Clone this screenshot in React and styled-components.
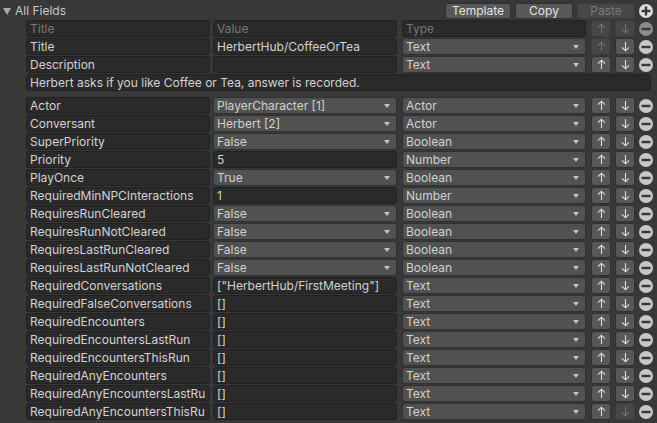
import React from "react";
import styled, { createGlobalStyle, css } from "styled-components";

const Global = createGlobalStyle`
  html, body { margin: 0; padding: 0; background: #383838; }
  body { font-family: Inter, "Noto Sans", "Liberation Sans", sans-serif; font-size: 12px; color: #d2d2d2; }
  * { box-sizing: border-box; }
`;

const Panel = styled.div`
  width: 657px;
  height: 423px;
  background: #383838;
  overflow: hidden;
  display: flex;
  flex-direction: column;
`;

const Header = styled.div`
  height: 20px;
  display: flex;
  align-items: center;
  padding: 1px 4px 0 3px;
`;

const Foldout = styled.span`
  width: 0;
  height: 0;
  border-left: 4px solid transparent;
  border-right: 4px solid transparent;
  border-top: 7px solid #a9a9a9;
  margin-right: 4px;
  margin-top: 1px;
`;

const HeaderTitle = styled.span`
  color: #c8c8c8;
  font-size: 12px;
  flex: 1;
`;

const HeaderButton = styled.div`
  height: 16px;
  width: ${(p) => p.$w}px;
  margin-right: 4px;
  border-radius: 3px;
  background: ${(p) => (p.$disabled ? "#474747" : "#585858")};
  border: 1px solid ${(p) => (p.$disabled ? "#3c3c3c" : "#303030")};
  color: ${(p) => (p.$disabled ? "#7c7c7c" : "#e4e4e4")};
  display: flex;
  align-items: center;
  justify-content: center;
  font-size: 12px;
`;

const Rows = styled.div`
  display: flex;
  flex-direction: column;
  padding-left: 26px;
`;

const Row = styled.div`
  display: flex;
  align-items: center;
  height: 17px;
  margin-bottom: ${(p) => (p.$mb ?? 1)}px;
`;

const fieldBase = css`
  height: 17px;
  width: 184px;
  border-radius: 3px;
  padding: 0 3px;
  display: flex;
  align-items: center;
  white-space: nowrap;
  overflow: hidden;
  font-size: 12px;
`;

const TextField = styled.div`
  ${fieldBase}
  width: ${(p) => p.$w ?? 184}px;
  margin-left: ${(p) => p.$ml ?? 0}px;
  background: #2a2a2a;
  border: 1px solid #212121;
  color: ${(p) => (p.$placeholder ? "#767676" : "#d2d2d2")};
`;

const Dropdown = styled.div`
  ${fieldBase}
  margin-left: ${(p) => p.$ml ?? 0}px;
  background: #515151;
  border: 1px solid #303030;
  color: #d2d2d2;
  justify-content: space-between;
  padding-right: 6px;
`;

const Caret = styled.span`
  width: 0;
  height: 0;
  border-left: 3.5px solid transparent;
  border-right: 3.5px solid transparent;
  border-top: 4px solid #c4c4c4;
  margin-top: 1px;
`;

const ArrowButton = styled.div`
  height: 17px;
  width: 20px;
  margin-left: ${(p) => p.$ml}px;
  border-radius: 3px;
  background: ${(p) => (p.$disabled ? "#464646" : "#585858")};
  border: 1px solid ${(p) => (p.$disabled ? "#3c3c3c" : "#303030")};
  color: ${(p) => (p.$disabled ? "#747474" : "#dedede")};
  display: flex;
  align-items: center;
  justify-content: center;
`;

const ArrowSvg = styled.svg`
  width: 9px;
  height: 11px;
  transform: ${(p) => (p.$down ? "rotate(180deg)" : "none")};
`;

const CircleBtn = styled.svg`
  width: 14px;
  height: 14px;
  margin-left: ${(p) => p.$ml ?? 4}px;
  flex: none;
`;

const Description = styled(TextField)`
  width: 625px;
`;

function Arrow({ down, disabled, ml }) {
  return (
    <ArrowButton $ml={ml} $disabled={disabled}>
      <ArrowSvg viewBox="0 0 9 11" $down={down}>
        <path d="M4.5 1.2 V10 M1 4.7 L4.5 1.2 L8 4.7" fill="none" stroke="currentColor" strokeWidth="1.1" />
      </ArrowSvg>
    </ArrowButton>
  );
}

function Minus({ disabled }) {
  const c = disabled ? "#8a8a8a" : "#c8c8c8";
  return (
    <CircleBtn viewBox="0 0 14 14">
      <circle cx="7" cy="7" r="7" fill={c} />
      <rect x="2.5" y="5.8" width="9" height="2.4" fill="#383838" />
    </CircleBtn>
  );
}

function Plus() {
  return (
    <CircleBtn viewBox="0 0 14 14" $ml={0}>
      <circle cx="7" cy="7" r="7" fill="#dcdcdc" />
      <rect x="2.5" y="5.8" width="9" height="2.4" fill="#383838" />
      <rect x="5.8" y="2.5" width="2.4" height="9" fill="#383838" />
    </CircleBtn>
  );
}

const fields = [
  ["Actor", "PlayerCharacter [1]", true, "Actor"],
  ["Conversant", "Herbert [2]", true, "Actor"],
  ["SuperPriority", "False", true, "Boolean"],
  ["Priority", "5", false, "Number"],
  ["PlayOnce", "True", true, "Boolean"],
  ["RequiredMinNPCInteractions", "1", false, "Number"],
  ["RequiresRunCleared", "False", true, "Boolean"],
  ["RequiresRunNotCleared", "False", true, "Boolean"],
  ["RequiresLastRunCleared", "False", true, "Boolean"],
  ["RequiresLastRunNotCleared", "False", true, "Boolean"],
  ["RequiredConversations", '["HerbertHub/FirstMeeting"]', false, "Text"],
  ["RequiredFalseConversations", "[]", false, "Text"],
  ["RequiredEncounters", "[]", false, "Text"],
  ["RequiredEncountersLastRun", "[]", false, "Text"],
  ["RequiredEncountersThisRun", "[]", false, "Text"],
  ["RequiredAnyEncounters", "[]", false, "Text"],
  ["RequiredAnyEncountersLastRu", "[]", false, "Text"],
  ["RequiredAnyEncountersThisRu", "[]", false, "Text"],
];

function FieldRow({ label, value, valueDropdown, type, upDisabled, downDisabled, mb }) {
  return (
    <Row $mb={mb}>
      <TextField>{label}</TextField>
      {valueDropdown ? (
        <Dropdown $ml={3}>
          <span>{value}</span>
          <Caret />
        </Dropdown>
      ) : (
        <TextField $ml={3}>{value}</TextField>
      )}
      <Dropdown $ml={5}>
        <span>{type}</span>
        <Caret />
      </Dropdown>
      <Arrow ml={5} disabled={upDisabled} />
      <Arrow ml={4} down disabled={downDisabled} />
      <Minus />
    </Row>
  );
}

export default function App() {
  return (
    <>
      <Global />
      <Panel>
        <Header>
          <Foldout />
          <HeaderTitle>All Fields</HeaderTitle>
          <HeaderButton $w={66}>Template</HeaderButton>
          <HeaderButton $w={58}>Copy</HeaderButton>
          <HeaderButton $w={58} $disabled>Paste</HeaderButton>
          <Plus />
        </Header>
        <Rows>
          <Row>
            <TextField $placeholder>Title</TextField>
            <TextField $ml={3} $placeholder>Value</TextField>
            <TextField $ml={5} $placeholder>Type</TextField>
            <Arrow ml={5} disabled />
            <Arrow ml={4} down disabled />
            <Minus disabled />
          </Row>
          <FieldRow label="Title" value="HerbertHub/CoffeeOrTea" type="Text" upDisabled />
          <FieldRow label="Description" value="" type="Text" />
          <Row $mb={6}>
            <Description>Herbert asks if you like Coffee or Tea, answer is recorded.</Description>
          </Row>
          {fields.map(([l, v, d, t], i) => (
            <FieldRow
              key={l}
              label={l}
              value={v}
              valueDropdown={d}
              type={t}
              downDisabled={i === fields.length - 1}
            />
          ))}
        </Rows>
      </Panel>
    </>
  );
}
